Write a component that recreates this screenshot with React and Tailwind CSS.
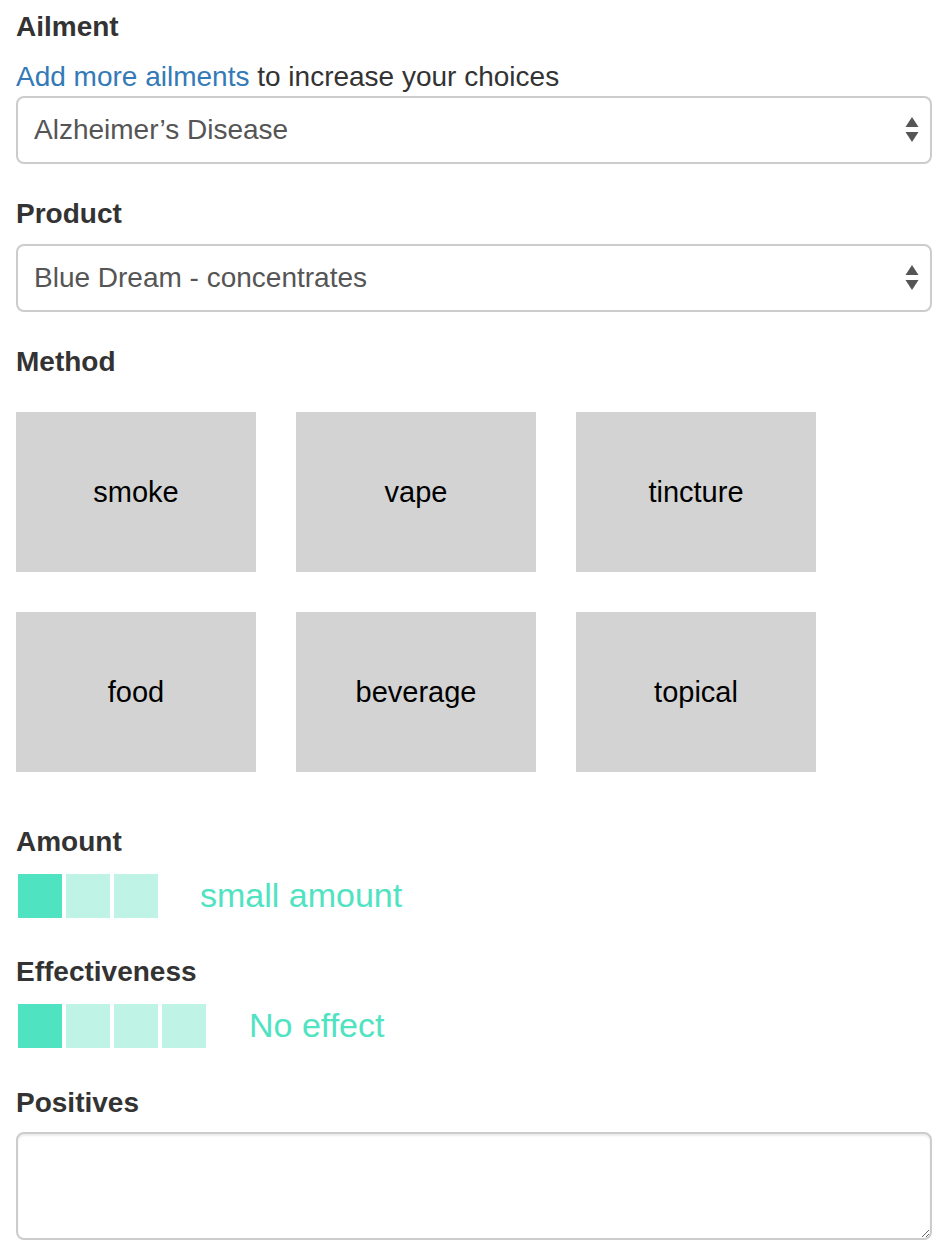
import React, { useState } from 'react';

const methods = ['smoke', 'vape', 'tincture', 'food', 'beverage', 'topical'];

const Label = ({ children, className = '' }) => (
  <div className={`text-[28px] leading-[40px] font-bold text-[#333] ${className}`}>{children}</div>
);

const SelectBox = ({ value, options }) => (
  <div className="relative">
    <select
      defaultValue={value}
      className="w-full h-[68px] appearance-none rounded-[8px] border-2 border-[#ccc] bg-white pl-4 pr-12 text-[28px] text-[#555] outline-none"
    >
      {options.map(o => <option key={o}>{o}</option>)}
    </select>
    <svg className="absolute right-[13px] top-[21px] pointer-events-none" width="14" height="26" viewBox="0 0 14 26">
      <path d="M7 0 L13.5 10 L0.5 10 Z" fill="#555" />
      <path d="M0.5 15 L13.5 15 L7 25 Z" fill="#555" />
    </svg>
  </div>
);

const Scale = ({ total, filled, label, labelClass }) => (
  <div className="flex items-center h-[48px]">
    <div className="flex">
      {Array.from({ length: total }).map((_, i) => (
        <div
          key={i}
          className={`w-[44px] h-[44px] m-[2px] ${i < filled ? 'bg-[#50e3c2]' : 'bg-[#bff3e6]'}`}
        />
      ))}
    </div>
    <span className={`text-[34px] leading-none text-[#50e3c2] -mt-[3px] ${labelClass}`}>{label}</span>
  </div>
);

export default function App() {
  const [method, setMethod] = useState(null);

  return (
    <div className="w-[948px] h-[1256px] bg-white px-4 pt-[7px] font-['Liberation_Sans',Arial,sans-serif] text-[#333] overflow-hidden">
      <Label className="mb-[10px]">Ailment</Label>
      <div className="text-[28px] leading-[40px] text-[#333]">
        <a href="#" className="text-[#337ab7]">Add more ailments</a> to increase your choices
      </div>
      <div className="-mt-px">
        <SelectBox value="Alzheimer’s Disease" options={['Alzheimer’s Disease', 'Anxiety', 'Chronic Pain']} />
      </div>

      <Label className="mt-[30px] mb-[10px]">Product</Label>
      <SelectBox value="Blue Dream - concentrates" options={['Blue Dream - concentrates', 'Blue Dream - flower']} />

      <Label className="mt-[30px]">Method</Label>
      <div className="mt-[30px] grid grid-cols-[240px_240px_240px] gap-x-[40px] gap-y-[40px]">
        {methods.map(m => (
          <button
            key={m}
            onClick={() => setMethod(m)}
            className={`h-[160px] flex items-center justify-center pt-[2px] text-[29px] text-black ${method === m ? 'bg-[#bbb]' : 'bg-[#d3d3d3]'}`}
          >
            {m}
          </button>
        ))}
      </div>

      <Label className="mt-[50px] mb-[10px]">Amount</Label>
      <Scale total={3} filled={1} label="small amount" labelClass="ml-[40px]" />

      <Label className="mt-[32px] mb-[10px]">Effectiveness</Label>
      <Scale total={4} filled={1} label="No effect" labelClass="ml-[41px]" />

      <Label className="mt-[33px] mb-[9px]">Positives</Label>
      <textarea
        className="block w-full h-[108px] rounded-[8px] border-2 border-[#ccc] bg-white px-4 py-2 text-[28px] text-[#555] outline-none shadow-[inset_0_2px_2px_rgba(0,0,0,0.075)]"
      />
    </div>
  );
}
